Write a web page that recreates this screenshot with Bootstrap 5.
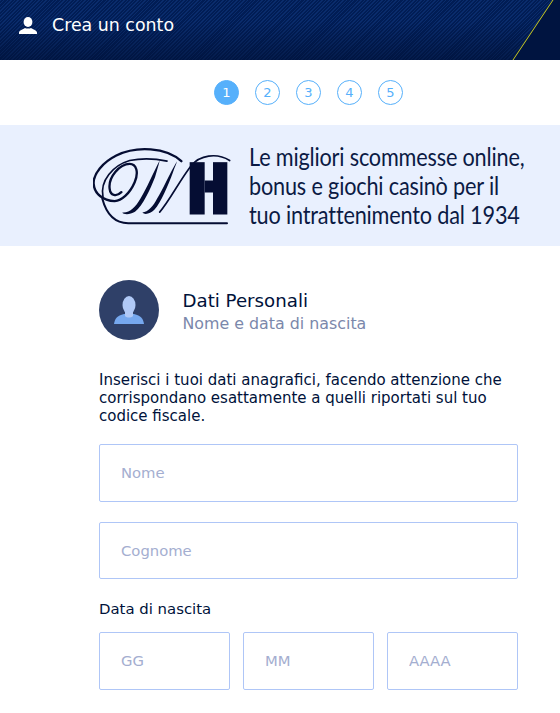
<!DOCTYPE html>
<html lang="it">
<head>
<meta charset="UTF-8">
<title>Crea un conto</title>
<link rel="stylesheet" href="https://cdn.jsdelivr.net/npm/bootstrap@5.3.0/dist/css/bootstrap.min.css">
<style>
body { font-family: "DejaVu Sans", Verdana, sans-serif; color: #001a4d; overflow: hidden; background: #fff; }
.top-bar { height: 60px; padding-bottom: 9px; color: #fff; background: repeating-linear-gradient(135deg, #0a2c6c 0 1px, #011d55 1px 2.5px); overflow: hidden; }
.top-shade { inset: 0; background: linear-gradient(180deg, rgba(0,15,50,0) 35%, rgba(0,15,50,.55) 100%); }
.top-corner { top: 0; right: 0; bottom: 0; width: 48px; }
.top-title { font-size: 17.4px; padding-left: 15px; }
.top-icon { margin-left: 19px; }
.steps { height: 65px; gap: 16px; padding-left: 57px; }
.step-dot { width: 25px; height: 25px; border: 1px solid #56b0fb; color: #56b0fb; font-size: 13px; line-height: 1; }
.step-dot.on { background: #56b0fb; color: #fff; }
.promo { height: 121px; background: #e9f0fe; padding-left: 93px; color: #0b1a44; }
.promo-logo { flex-shrink: 0; }
.promo-text { font-family: Lato, sans-serif; font-size: 24.5px; line-height: 28.7px; margin-left: 16px; padding-top: 2px; white-space: nowrap; letter-spacing: -.2px; transform: scaleX(.884); transform-origin: left center; }
.form-wrap { margin: 34px 42px 0 99px; }
.avatar { width: 60px; height: 60px; background: #2f4068; margin-right: 23.5px; }
.head-title { font-size: 18.2px; line-height: 23px; padding-top: 3px; color: #00123a; }
.head-sub { font-size: 15.85px; line-height: 23px; color: #7b88ab; }
.intro { font-size: 15px; line-height: 18px; color: #00123a; margin: 31px -4px 19px 0; }
.plain-input.form-control { height: 57.5px; border: 1px solid #afc6f7; border-radius: 2px; padding: 0 21px; font-size: 14.8px; color: #001a4d; margin-bottom: 20px; }
.plain-input.form-control::placeholder { color: #a4aed0; opacity: 1; }
.field-label { font-size: 14.9px; line-height: 20px; margin-bottom: 13px; color: #00123a; }
.date-row { gap: 13px; }
.date-row .plain-input { margin-bottom: 0; }
</style>
</head>
<body>
<header class="top-bar position-relative d-flex align-items-center">
  <div class="top-shade position-absolute"></div>
  <svg class="top-corner position-absolute" viewBox="0 0 48 60" preserveAspectRatio="none">
    <polygon points="41,0 48,0 48,60 1,60" fill="#001440"/>
    <line x1="41" y1="0" x2="1" y2="60" stroke="#c8c81e" stroke-width="1"/>
  </svg>
  <svg class="top-icon position-relative" width="18" height="17" viewBox="0 0 18 17" fill="#fff">
    <ellipse cx="9" cy="5" rx="4.4" ry="5"/>
    <path d="M0 17v-1.500c0-2 4-3 6-4.500 1 .8 5 .8 6 0 2 1.500 6 2.500 6 4.500v1.500z"/>
  </svg>
  <span class="top-title position-relative">Crea un conto</span>
</header>

<div class="steps d-flex justify-content-center align-items-center">
  <span class="step-dot on rounded-circle d-flex align-items-center justify-content-center">1</span>
  <span class="step-dot rounded-circle d-flex align-items-center justify-content-center">2</span>
  <span class="step-dot rounded-circle d-flex align-items-center justify-content-center">3</span>
  <span class="step-dot rounded-circle d-flex align-items-center justify-content-center">4</span>
  <span class="step-dot rounded-circle d-flex align-items-center justify-content-center">5</span>
</div>

<section class="promo d-flex align-items-center">
  <svg class="promo-logo" width="140" height="87" viewBox="40 35 420 260" fill="none" stroke="#050d33" stroke-linecap="round">
    <path d="M305 92C260 50 170 45 110 75 70 95 40 130 42 160 44 190 70 210 105 212 125 210 150 190 165 155 178 125 170 100 150 100 120 100 85 140 90 175 92 195 110 200 125 185" stroke-width="7"/>
    <path d="M70 200C60 150 100 105 150 90 190 82 230 85 262 92" stroke-width="5"/>
    <path d="M68 205C80 250 105 280 150 278H442" stroke-width="6"/>
    <path d="M240 245C270 210 300 150 335 105 360 75 410 65 450 90" stroke-width="5"/>
    <g fill="#050d33" stroke="none">
      <path d="M240 90C222 125 200 175 182 205 168 230 150 248 128 246 130 252 150 254 166 244 190 225 212 175 226 140 232 120 238 100 240 90z"/>
      <path d="M292 92C272 125 248 180 232 205 222 225 205 246 188 246 195 254 212 250 224 238 244 215 265 165 280 125 285 110 290 100 292 92z"/>
      <rect x="330" y="95" width="45" height="157"/>
      <rect x="400" y="95" width="43" height="157"/>
      <rect x="375" y="150" width="25" height="36"/>
    </g>
  </svg>
  <div class="promo-text">Le migliori scommesse online,<br>bonus e giochi casinò per il<br>tuo intrattenimento dal 1934</div>
</section>

<main class="form-wrap">
  <div class="d-flex align-items-center">
    <div class="avatar rounded-circle d-flex align-items-center justify-content-center">
      <svg width="30" height="29" viewBox="0 0 30 29">
        <path d="M0 28c1-6 3-8 10-10h10c7 2 9 4 10 10z" fill="#76a8ee"/>
        <ellipse cx="15" cy="9" rx="6.500" ry="9" fill="#b0c9f6"/>
        <path d="M11 14h8v6c-2 2-6 2-8 0z" fill="#b0c9f6"/>
      </svg>
    </div>
    <div>
      <div class="head-title">Dati Personali</div>
      <div class="head-sub">Nome e data di nascita</div>
    </div>
  </div>
  <p class="intro">Inserisci i tuoi dati anagrafici, facendo attenzione che corrispondano esattamente a quelli riportati sul tuo codice fiscale.</p>
  <input class="form-control plain-input" placeholder="Nome">
  <input class="form-control plain-input" placeholder="Cognome">
  <div class="field-label">Data di nascita</div>
  <div class="date-row d-flex">
    <input class="form-control plain-input" placeholder="GG">
    <input class="form-control plain-input" placeholder="MM">
    <input class="form-control plain-input" placeholder="AAAA">
  </div>
</main>
<script src="https://cdn.jsdelivr.net/npm/bootstrap@5.3.0/dist/js/bootstrap.bundle.min.js"></script>
</body>
</html>
